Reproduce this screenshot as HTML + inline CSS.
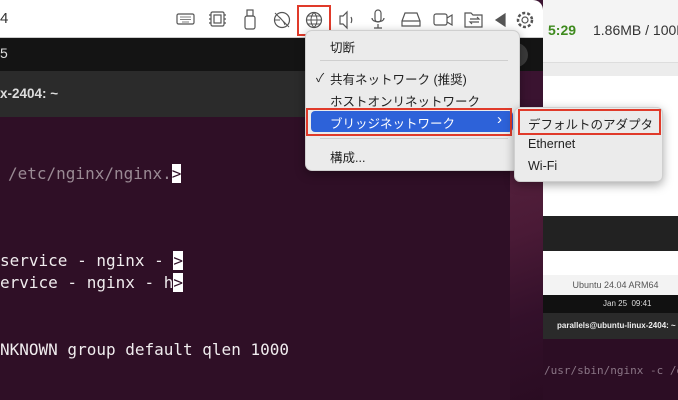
<!DOCTYPE html>
<html><head><meta charset="utf-8"><style>
*{margin:0;padding:0;box-sizing:border-box}
body{width:678px;height:400px;overflow:hidden;position:relative;background:#2f0f26;font-family:"Liberation Sans","Noto Sans CJK JP",sans-serif}
.a{position:absolute}
.mono{font-family:"DejaVu Sans Mono","Liberation Mono",monospace;font-size:16px;color:#f0ecee;white-space:pre}
.mi{position:absolute;left:24px;font-size:12.5px;color:#222}
</style></head><body>
<div class="a" style="left:510px;top:0;width:168px;height:400px;background:#3a1330"></div>
<div class="a" style="left:510px;top:120px;width:35px;height:280px;background:linear-gradient(160deg,#5a2440 0%,#4a1a36 40%,#33102a 70%,#2a0c22 100%)"></div>
<div class="a" style="left:543px;top:0;width:135px;height:62px;background:#f4f4f4"></div>
<div class="a" style="left:543px;top:62px;width:135px;height:14px;background:#ececec;border-top:1px solid #ddd"></div>
<div class="a" style="left:543px;top:76px;width:135px;height:140px;background:#fff"></div>
<div class="a" style="left:543px;top:216px;width:135px;height:35px;background:#222"></div>
<div class="a" style="left:543px;top:251px;width:135px;height:24px;background:#fff"></div>
<div class="a" style="left:543px;top:275px;width:135px;height:20px;background:#f3f3f3;font-size:9px;color:#555;text-align:center;line-height:20px;padding-left:10px">Ubuntu 24.04 ARM64</div>
<div class="a" style="left:543px;top:295px;width:135px;height:18px;background:#111;font-size:8px;color:#ddd;line-height:18px;padding-left:60px">Jan 25&nbsp; 09:41</div>
<div class="a" style="left:543px;top:313px;width:135px;height:26px;background:#2a2a2a;font-size:8px;color:#eee;font-weight:bold;line-height:26px;padding-left:14px;white-space:nowrap">parallels@ubuntu-linux-2404: ~</div>
<div class="a" style="left:543px;top:339px;width:135px;height:61px;background:#2c0d24"></div>
<div class="a mono" style="left:544px;top:364px;font-size:11px;color:#8a7585">/usr/sbin/nginx -c /etc/</div>
<div class="a" style="left:548px;top:22px;font-size:14px;font-weight:bold;color:#3e8a1e">5:29</div>
<div class="a" style="left:593px;top:22px;font-size:14px;color:#333;white-space:nowrap">1.86MB / 100M</div>

<div class="a" style="left:0;top:38px;width:543px;height:33px;background:#141414"></div>
<div class="a" style="left:0;top:45px;font-size:14px;color:#ddd">5</div>
<div class="a" style="left:492px;top:43px;width:36px;height:24px;border-radius:12px;background:#3a3a3a"></div>
<div class="a" style="left:0;top:71px;width:510px;height:46px;background:#2b2b2b"></div>
<div class="a" style="left:0;top:86px;font-size:13.5px;font-weight:bold;color:#ddd">x-2404: ~</div>
<div class="a" style="left:0;top:117px;width:510px;height:283px;background:#2f0f26"></div>
<div class="a mono" style="left:8px;top:164px;color:#9a8a94">/etc/nginx/nginx.<span style="background:#fff;color:#2f0f26">&gt;</span></div>
<div class="a mono" style="left:0;top:251px">service - nginx - <span style="background:#fff;color:#2f0f26">&gt;</span></div>
<div class="a mono" style="left:0;top:273px">ervice - nginx - h<span style="background:#fff;color:#2f0f26">&gt;</span></div>
<div class="a mono" style="left:0;top:340px">NKNOWN group default qlen 1000</div>

<div class="a" style="left:0;top:0;width:543px;height:38px;background:#fff;border-radius:0 10px 0 0;border-bottom:1px solid #ccc"></div>
<div class="a" style="left:0;top:10px;font-size:15px;color:#333">4</div>
<svg class="a" style="left:170px;top:0" width="370" height="38" fill="none" stroke="#555" stroke-width="1.2">
<rect x="7" y="14" width="17" height="10" rx="1.5"/><path d="M10 17h11M10 19.5h11M12 22h7" stroke-width="0.8"/>
<rect x="41" y="12" width="13" height="14" rx="1.5"/><rect x="44" y="15" width="7" height="8"/><path d="M39 15h2M39 19h2M39 23h2M54 15h2M54 19h2M54 23h2"/>
<rect x="75" y="16" width="10" height="13" rx="2"/><rect x="77" y="10" width="6" height="6"/>
<circle cx="112" cy="20" r="7.5"/><path d="M105 13l14 14M108 16c3 2 6 6 7 9M104 20h6" stroke-width="1"/>
<circle cx="144" cy="20" r="7.5"/><path d="M136.5 20h15M144 12.5c-4 4-4 11 0 15M144 12.5c4 4 4 11 0 15M138 16h12M138 24h12" stroke-width="1"/>
<path d="M170 16h3l4-4v16l-4-4h-3zM181 17c1 2 1 4 0 6"/>
<rect x="205" y="10" width="6" height="12" rx="3"/><path d="M202 18c0 5 12 5 12 0M208 24v4M204 28h8"/>
<path d="M232 21l3-8h12l3 8v5h-18zM232 21h18"/>
<rect x="264" y="14" width="13" height="11" rx="2"/><path d="M277 18l5-3v10l-5-3"/>
<path d="M295 13h6l2 2h9v12h-17zM300 19h9l-2-2M309 22h-9l2 2"/>
<path d="M335 14v12l-9-6z" fill="#555"/>
<circle cx="355" cy="20" r="3"/><circle cx="355" cy="20" r="7" stroke-dasharray="3 2" stroke-width="2.5"/>
</svg>
<div class="a" style="left:297px;top:5px;width:34px;height:31px;border:2px solid #e03a2a"></div>

<div class="a" style="left:305px;top:30px;width:215px;height:141px;background:#ebebeb;border-radius:7px;box-shadow:0 3px 10px rgba(0,0,0,.35);border:1px solid #cfcfcf">
<div class="mi" style="top:6px">切断</div>
<div class="a" style="left:14px;top:29px;width:188px;height:1px;background:#cfcfcf"></div>
<div class="a" style="left:10px;top:38px;font-size:12px;color:#222">✓</div>
<div class="mi" style="top:38px">共有ネットワーク (推奨)</div>
<div class="mi" style="top:60px">ホストオンリネットワーク</div>
<div class="a" style="left:5px;top:80px;width:202px;height:21px;background:#2d62d9;border-radius:4px"></div>
<div class="mi" style="top:82px;color:#fff">ブリッジネットワーク</div>
<div class="a" style="left:191px;top:80px;color:#fff;font-size:15px">›</div>
<div class="a" style="left:14px;top:107px;width:188px;height:1px;background:#cfcfcf"></div>
<div class="mi" style="top:116px">構成...</div>
</div>
<div class="a" style="left:306px;top:108px;width:206px;height:28px;border:2px solid #e03a2a"></div>

<div class="a" style="left:514px;top:107px;width:149px;height:75px;background:#ebebeb;border-radius:6px;box-shadow:0 3px 10px rgba(0,0,0,.35);border:1px solid #cfcfcf">
<div class="mi" style="left:13px;top:6px">デフォルトのアダプタ</div>
<div class="mi" style="left:13px;top:29px">Ethernet</div>
<div class="mi" style="left:13px;top:51px">Wi-Fi</div>
</div>
<div class="a" style="left:518px;top:109px;width:143px;height:26px;border:2px solid #e03a2a"></div>
</body></html>
